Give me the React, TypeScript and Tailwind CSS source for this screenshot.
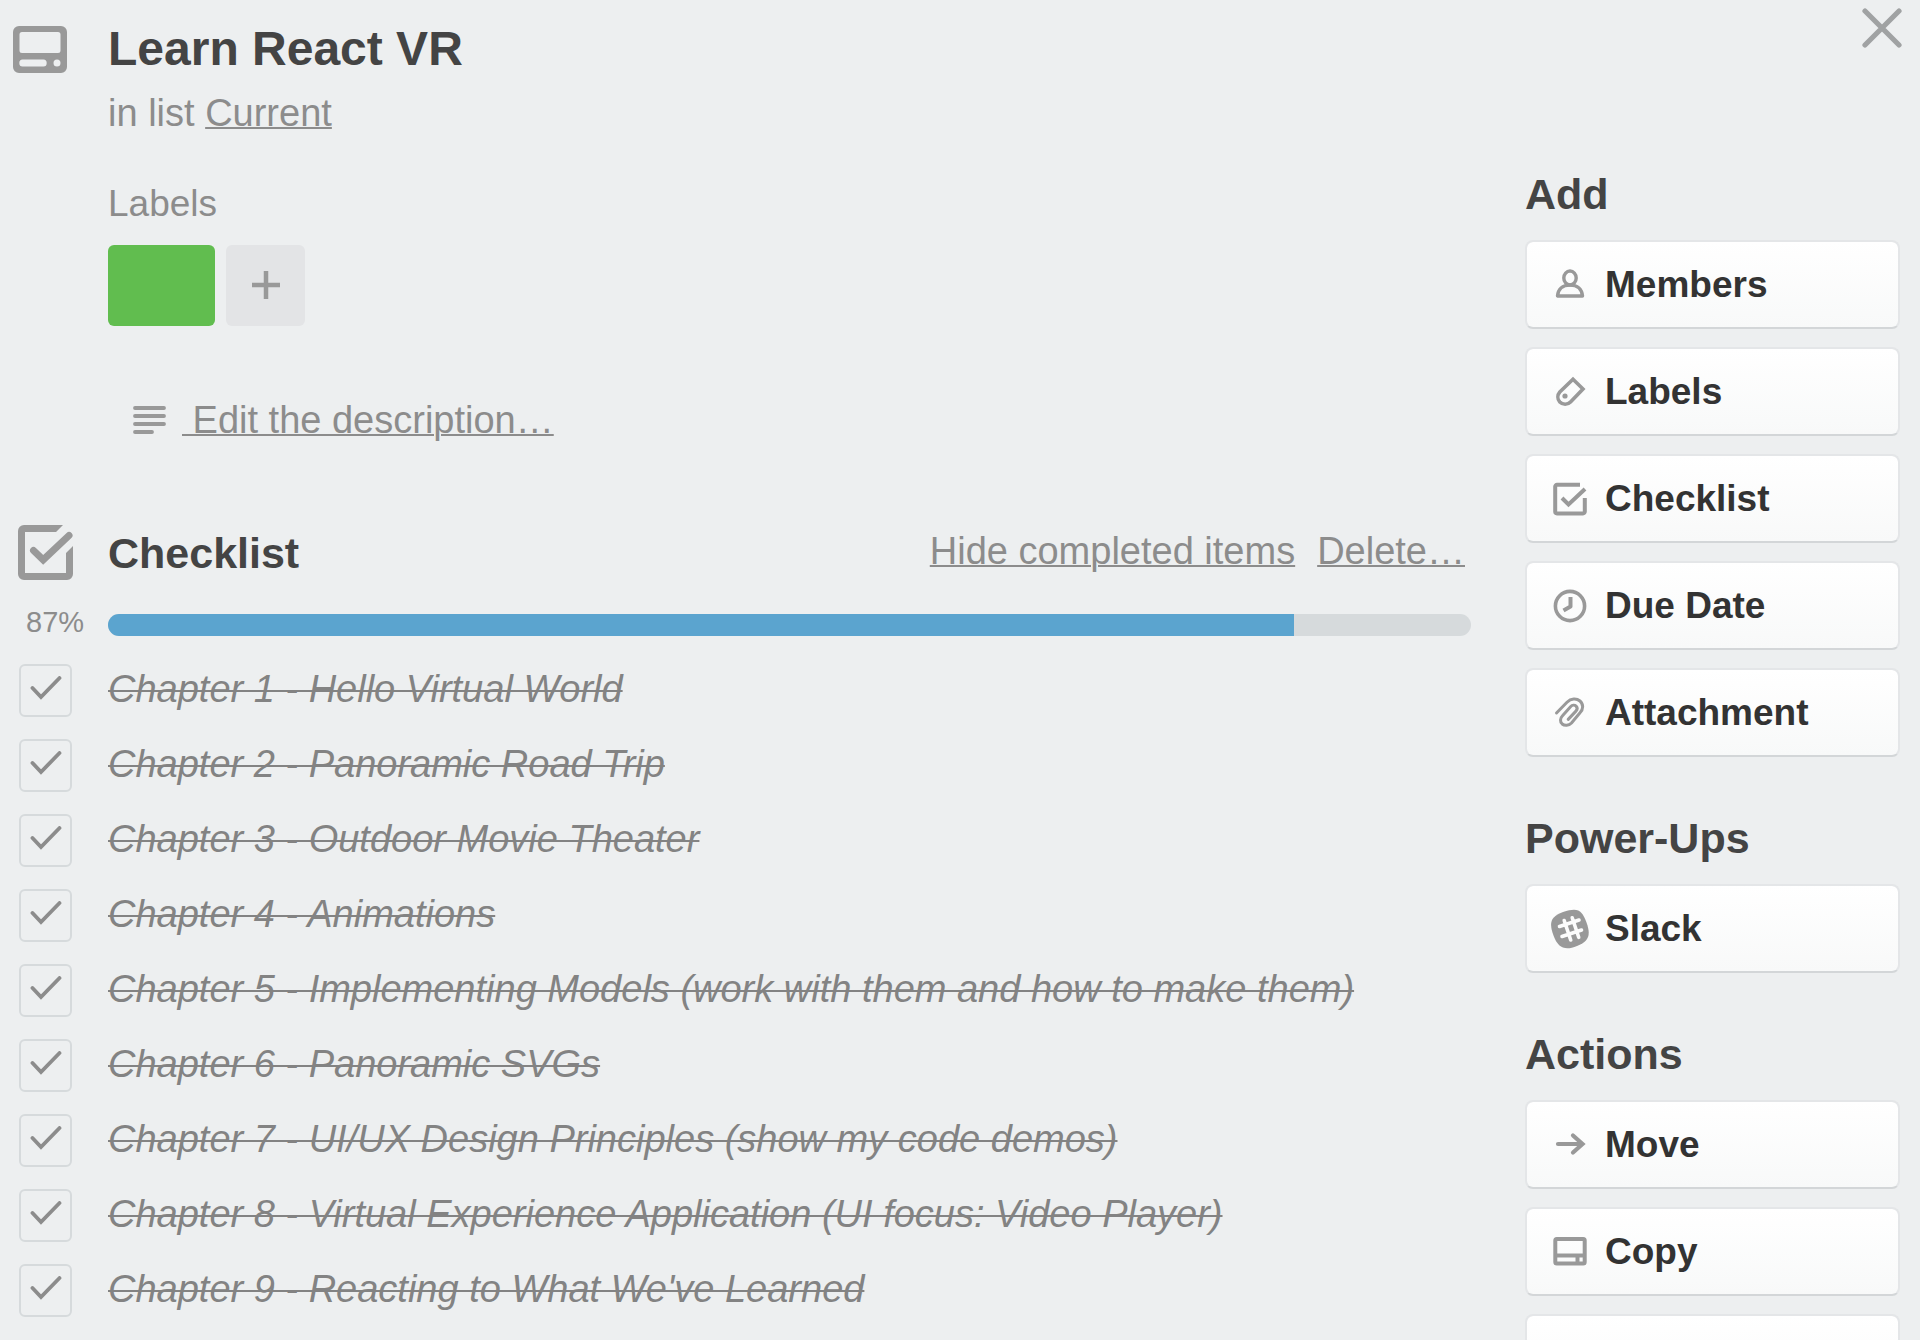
import React, { useState } from "react";

type IconProps = { className?: string };

const CloseIcon: React.FC<IconProps> = ({ className }) => (
  <svg className={className} viewBox="0 0 40 40" fill="none" stroke="currentColor" strokeWidth="5.200" strokeLinecap="round" aria-hidden="true">
    <path d="M3 3l34 34M37 3L3 37" />
  </svg>
);

const CardIcon: React.FC<IconProps> = ({ className }) => (
  <svg className={className} viewBox="0 0 54 47" fill="currentColor" fillRule="evenodd" aria-hidden="true">
    <path d="M6 0h42a6 6 0 0 1 6 6v35a6 6 0 0 1-6 6H6a6 6 0 0 1-6-6V6a6 6 0 0 1 6-6zM9 6a2.500 2.500 0 0 0-2.500 2.500v16A2.500 2.500 0 0 0 9 27h36a2.500 2.500 0 0 0 2.500-2.500v-16A2.500 2.500 0 0 0 45 6zM9.500 33.500a3.200 3.500 0 0 0 0 7h21a3.200 3.500 0 0 0 0-7zM44 33.500a3.500 3.500 0 0 0 0 7 3.500 3.500 0 0 0 0-7z" />
  </svg>
);

const DescriptionIcon: React.FC<IconProps> = ({ className }) => (
  <svg className={className} viewBox="0 0 33 28" fill="none" stroke="currentColor" strokeWidth="3.800" strokeLinecap="round" aria-hidden="true">
    <path d="M2 2h29M2 10h29M2 18h29M2 26h17" />
  </svg>
);

const ChecklistIcon: React.FC<IconProps> = ({ className }) => (
  <svg className={className} viewBox="0 0 55 55" fill="none" aria-hidden="true">
    <path fill="currentColor" d="M45 0H6a6 6 0 0 0-6 6v43a6 6 0 0 0 6 6h43a6 6 0 0 0 6-6V21l-7 7v20H7V7h31z" />
    <path stroke="currentColor" strokeWidth="7" strokeLinecap="round" d="M15.500 25.500l9.700 9.300L51 10.500" />
  </svg>
);

const SmallChecklistIcon: React.FC<IconProps> = ({ className }) => (
  <svg className={className} viewBox="0 0 34 34" fill="none" stroke="currentColor" strokeWidth="4" aria-hidden="true">
    <path d="M27 2.800H4A1.800 1.800 0 0 0 2.200 4.600v25A1.800 1.800 0 0 0 4 31.400h26a1.800 1.800 0 0 0 1.800-1.800V16" />
    <path d="M9 16l6.500 6.500L32 7" />
  </svg>
);

const MemberIcon: React.FC<IconProps> = ({ className }) => (
  <svg className={className} viewBox="0 0 34 34" fill="none" stroke="currentColor" strokeWidth="3.400" strokeLinejoin="round" aria-hidden="true">
    <ellipse cx="17" cy="10" rx="6.200" ry="7" />
    <path d="M4.500 28h25c-.5-6.500-5-11-12.500-11S5 21.500 4.500 28z" />
  </svg>
);

const LabelIcon: React.FC<IconProps> = ({ className }) => (
  <svg className={className} viewBox="0 0 34 34" fill="none" stroke="currentColor" strokeWidth="3.600" aria-hidden="true">
    <path d="M20 4.200L30 14 17.500 27a7.500 7.500 0 0 1-10.700 0 7.500 7.500 0 0 1 0-10z" />
    <circle cx="12" cy="21" r="2.600" fill="currentColor" stroke="none" />
  </svg>
);

const ClockIcon: React.FC<IconProps> = ({ className }) => (
  <svg className={className} viewBox="0 0 34 34" fill="none" stroke="currentColor" strokeWidth="3.600" aria-hidden="true">
    <circle cx="17" cy="17" r="14.600" />
    <path strokeWidth="4" strokeLinejoin="round" d="M17.500 8v9.500L10.500 21.500" />
  </svg>
);

const ClipIcon: React.FC<IconProps> = ({ className }) => (
  <svg className={className} viewBox="0 0 34 34" fill="none" stroke="currentColor" strokeWidth="3" strokeLinecap="round" aria-hidden="true">
    <path d="M3.500 17L14 6.200c4-4 9.500-4.200 13-1.200 3.600 3.200 3.500 8.300 0 11.800L18.500 27c-2.800 2.900-7 3-9.300 1-2.400-2.200-2.200-5.600.3-8.200l8-9.100c1.800-1.800 4.200-1.900 5.600-.6 1.400 1.400 1.200 3.600-.4 5.300l-7.500 8" />
  </svg>
);

const SlackIcon: React.FC<IconProps> = ({ className }) => (
  <svg className={className} viewBox="0 0 38 40" aria-hidden="true">
    <path fill="currentColor" d="M12 3C27-2 31 1 35.500 13.500S38 32 26 37 7 39 2.500 26.500-1 8 12 3z" />
    <path fill="none" stroke="#fcfcfc" strokeWidth="3.600" strokeLinecap="round" d="M13.200 11.500l6.500 19.500M21.200 8.800l6.500 19.500M8.500 17.500L28 11M11 27.500L30.500 21" />
  </svg>
);

const ArrowIcon: React.FC<IconProps> = ({ className }) => (
  <svg className={className} viewBox="0 0 34 34" fill="none" stroke="currentColor" strokeWidth="4.200" strokeLinecap="round" aria-hidden="true">
    <path d="M5 16h24M20 7.500l9.500 8.500-9.500 8.500" />
  </svg>
);

const CopyIcon: React.FC<IconProps> = ({ className }) => (
  <svg className={className} viewBox="0 0 34 34" fill="none" stroke="currentColor" strokeWidth="4" aria-hidden="true">
    <rect x="2.300" y="4" width="29.400" height="24.500" rx="1.500" />
    <path d="M2.300 20.500h29.400M24.500 20.500v8" />
  </svg>
);

const CheckMark: React.FC<IconProps> = ({ className }) => (
  <svg className={className} viewBox="0 0 32 24" fill="none" stroke="currentColor" strokeWidth="3.800" strokeLinecap="round" aria-hidden="true">
    <path d="M2.500 12l8.500 9L29.500 2" />
  </svg>
);

const chapters = [
  "Chapter 1 - Hello Virtual World",
  "Chapter 2 - Panoramic Road Trip",
  "Chapter 3 - Outdoor Movie Theater",
  "Chapter 4 - Animations",
  "Chapter 5 - Implementing Models (work with them and how to make them)",
  "Chapter 6 - Panoramic SVGs",
  "Chapter 7 - UI/UX Design Principles (show my code demos)",
  "Chapter 8 - Virtual Experience Application (UI focus: Video Player)",
  "Chapter 9 - Reacting to What We've Learned",
];

const SidebarButton: React.FC<{ label: string; icon: React.ReactNode }> = ({ label, icon }) => (
  <button
    type="button"
    className="flex h-[89px] w-full items-center gap-[18px] rounded-lg border-2 border-[#e4e6e8] border-b-[#d3d6d8] bg-linear-to-b from-white to-[#f8f9f9] bg-clip-padding pl-[26px] text-left text-[37px] leading-[48px] font-bold text-[#333333]"
  >
    <span className="flex w-[34px] justify-center text-[#999999]">{icon}</span>
    {label}
  </button>
);

const SidebarSection: React.FC<{ title: string; children: React.ReactNode }> = ({ title, children }) => (
  <section className="pr-0.5">
    <h3 className="mb-[18px] text-[43px] leading-[56px] font-bold text-[#444444]">{title}</h3>
    <div className="flex flex-col gap-[18px]">{children}</div>
  </section>
);

const ChecklistItem: React.FC<{ text: string }> = ({ text }) => {
  const [done, setDone] = useState(true);

  return (
    <li>
      <label className="flex items-start">
        <span className="mr-[36px] ml-[19px] grid size-[53px] shrink-0 place-items-center">
          <input
            type="checkbox"
            checked={done}
            onChange={() => setDone(!done)}
            className="col-start-1 row-start-1 size-[53px] appearance-none rounded-md border-2 border-[#d6dadc]"
          />
          {done && <CheckMark className="pointer-events-none col-start-1 row-start-1 mb-1.5 h-6 w-8 text-[#8c8c8c]" />}
        </span>
        <span className={done ? "text-[38px] leading-[50px] text-[#838383] italic line-through decoration-2" : "text-[38px] leading-[50px] text-[#4d4d4d]"}>
          {text}
        </span>
      </label>
    </li>
  );
};

const App: React.FC = () => {
  const progress = 87;

  return (
    <div className="flex h-screen items-start gap-[54px] overflow-hidden bg-[#edeff0] pr-[18px] font-['Liberation_Sans',Arial,sans-serif] text-[#8c8c8c]">
      <main className="min-w-0 flex-1 pt-[21px]">
        {/* Card header */}
        <header className="flex">
          <div className="w-[108px] shrink-0 pt-[5px] pl-[13px]">
            <CardIcon className="h-[47px] w-[54px] text-[#999999]" />
          </div>
          <div>
            <h1 className="text-[48px] leading-[56px] font-bold text-[#444444]">Learn React VR</h1>
            <p className="mt-3 text-[38px] leading-[48px]">
              in list <a href="#list" className="underline decoration-2">Current</a>
            </p>
          </div>
        </header>

        {/* Labels */}
        <section className="mt-[43px] pl-[108px]">
          <h2 className="text-[37px] leading-[48px]">Labels</h2>
          <div className="mt-[17px] flex gap-[11px]">
            <button type="button" aria-label="Green label" className="h-[81px] w-[107px] rounded-md bg-[#61bd4f]" />
            <button type="button" aria-label="Add label" className="flex h-[81px] w-[79px] items-center justify-center rounded-md bg-[#e3e4e6] pb-0.5">
              <svg className="size-7 text-[#999999]" viewBox="0 0 28 28" stroke="currentColor" strokeWidth="4.500" aria-hidden="true">
                <path d="M14 0v28M0 14h28" />
              </svg>
            </button>
          </div>
        </section>

        {/* Description */}
        <div className="mt-[70px] flex items-center gap-[16px] pl-[133px]">
          <DescriptionIcon className="h-7 w-[33px] text-[#999999]" />
          <a href="#description" className="text-[38px] leading-[48px] whitespace-pre underline decoration-2"> Edit the description…</a>
        </div>

        {/* Checklist */}
        <section className="mt-[81px]">
          <div className="flex items-start">
            <div className="w-[108px] shrink-0 pl-[18px]">
              <ChecklistIcon className="size-[55px] text-[#999999]" />
            </div>
            <h2 className="flex-1 text-[43px] leading-[56px] font-bold text-[#444444]">Checklist</h2>
            <div className="flex gap-[22px] pt-0.5 pr-[6px] text-[38px] leading-[48px]">
              <a href="#hide" className="underline decoration-2">Hide completed items</a>
              <a href="#delete" className="underline decoration-2">Delete…</a>
            </div>
          </div>

          <div className="mt-[25px] flex items-start">
            <span className="w-[108px] shrink-0 pl-[26px] text-[29px] leading-8">{progress}%</span>
            <div
              role="progressbar"
              aria-label="Checklist progress"
              aria-valuenow={progress}
              className="mt-2 h-[22px] flex-1 overflow-hidden rounded-full bg-[#d6dadc]"
            >
              <div className="h-full bg-[#5ba4cf]" style={{ width: `${progress}%` }} />
            </div>
          </div>

          <ul className="mt-[26px] flex flex-col gap-[22px]">
            {chapters.map((chapter) => (
              <ChecklistItem key={chapter} text={chapter} />
            ))}
          </ul>
        </section>
      </main>

      <aside className="w-[377px] shrink-0 pt-2">
        <div className="mb-[118px] flex justify-end">
          <button type="button" aria-label="Close" className="text-[#a0a2a3]">
            <CloseIcon className="size-10" />
          </button>
        </div>

        <div className="flex flex-col gap-[53px]">
          <SidebarSection title="Add">
            <SidebarButton label="Members" icon={<MemberIcon className="size-[34px]" />} />
            <SidebarButton label="Labels" icon={<LabelIcon className="size-[34px]" />} />
            <SidebarButton label="Checklist" icon={<SmallChecklistIcon className="size-[34px]" />} />
            <SidebarButton label="Due Date" icon={<ClockIcon className="size-[34px]" />} />
            <SidebarButton label="Attachment" icon={<ClipIcon className="size-[34px]" />} />
          </SidebarSection>

          <SidebarSection title="Power-Ups">
            <SidebarButton label="Slack" icon={<SlackIcon className="h-10 w-[38px] shrink-0" />} />
          </SidebarSection>

          <SidebarSection title="Actions">
            <SidebarButton label="Move" icon={<ArrowIcon className="size-[34px]" />} />
            <SidebarButton label="Copy" icon={<CopyIcon className="size-[34px]" />} />
            <SidebarButton label="" icon={null} />
          </SidebarSection>
        </div>
      </aside>
    </div>
  );
};

export default App;
